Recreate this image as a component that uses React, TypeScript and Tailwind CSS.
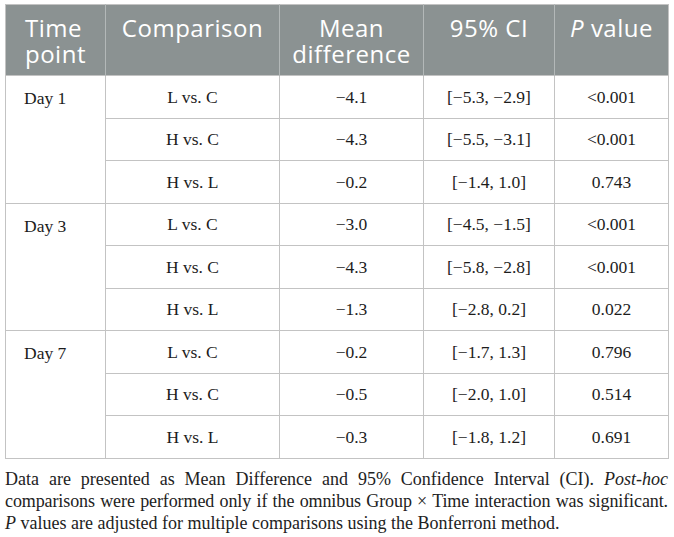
const rows = [
  { day: 'Day 1', items: [
    ['L vs. C', '\u22124.1', '[\u22125.3, \u22122.9]', '<0.001'],
    ['H vs. C', '\u22124.3', '[\u22125.5, \u22123.1]', '<0.001'],
    ['H vs. L', '\u22120.2', '[\u22121.4, 1.0]', '0.743'],
  ] },
  { day: 'Day 3', items: [
    ['L vs. C', '\u22123.0', '[\u22124.5, \u22121.5]', '<0.001'],
    ['H vs. C', '\u22124.3', '[\u22125.8, \u22122.8]', '<0.001'],
    ['H vs. L', '\u22121.3', '[\u22122.8, 0.2]', '0.022'],
  ] },
  { day: 'Day 7', items: [
    ['L vs. C', '\u22120.2', '[\u22121.7, 1.3]', '0.796'],
    ['H vs. C', '\u22120.5', '[\u22122.0, 1.0]', '0.514'],
    ['H vs. L', '\u22120.3', '[\u22121.8, 1.2]', '0.691'],
  ] },
];

export default function App() {
  return (
    <div className="bg-white w-[674px] h-[537px] pl-[5px] pt-[4px] pr-[6px] text-[#1c1c1c]">
      <table className="border-collapse w-[663px] table-fixed border border-[#c3c3c3]">
        <colgroup>
          <col className="w-[100px]" />
          <col className="w-[174px]" />
          <col className="w-[144px]" />
          <col className="w-[131px]" />
          <col className="w-[114px]" />
        </colgroup>
        <thead>
          <tr className="h-[71px] bg-[#8b9292] text-white text-[24px] leading-[26px] tracking-[0.5px] font-['Open_Sans',sans-serif]">
            <th className="align-top font-normal text-left pl-[19px] pt-[10px] border-r border-[#b3b8b8]">Time<br />point</th>
            <th className="align-top font-normal text-center pt-[10px] border-r border-[#b3b8b8]">Comparison</th>
            <th className="align-top font-normal text-center pt-[10px] border-r border-[#b3b8b8]">Mean<br />difference</th>
            <th className="align-top font-normal text-center pt-[10px] border-r border-[#b3b8b8]">95% CI</th>
            <th className="align-top font-normal text-center pt-[10px]"><i>P</i> value</th>
          </tr>
        </thead>
        <tbody className="font-['Liberation_Serif',serif] text-[17.5px]">
          {rows.map((g) =>
            g.items.map((r, i) => (
              <tr key={g.day + i} className="h-[42.5px]">
                {i === 0 && (
                  <td rowSpan={3} className="align-top pl-[18px] pt-[9px] border border-[#c3c3c3]">{g.day}</td>
                )}
                {r.map((c, j) => (
                  <td key={j} className="text-center align-middle border border-[#c3c3c3]">{c}</td>
                ))}
              </tr>
            ))
          )}
        </tbody>
      </table>
      <div className="mt-[9px] w-[663px] font-['Liberation_Serif',serif] text-[18px] leading-[22px] text-[#222]">
        <p className="text-justify [text-align-last:justify] whitespace-nowrap">
          Data are presented as Mean Difference and 95% Confidence Interval (CI). <i>Post-hoc</i>
        </p>
        <p className="text-justify [text-align-last:justify] whitespace-nowrap tracking-[-0.1px]">
          comparisons were performed only if the omnibus Group × Time interaction was significant.
        </p>
        <p>
          <i>P</i> values are adjusted for multiple comparisons using the Bonferroni method.
        </p>
      </div>
    </div>
  );
}
